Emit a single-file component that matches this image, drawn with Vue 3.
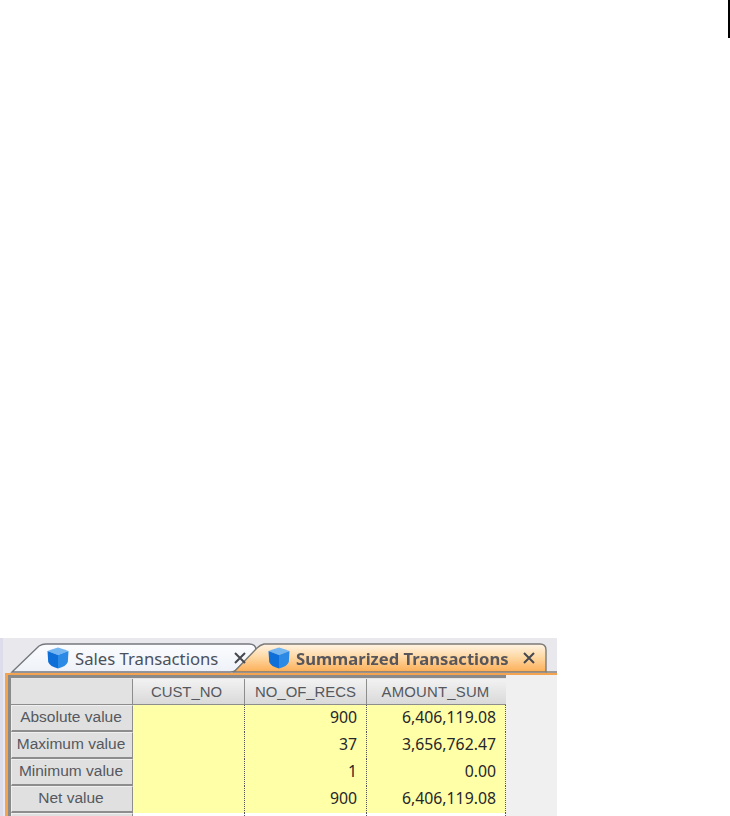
<script setup>
const rows = [
  { label: 'Absolute value', cust: '', recs: '900', sum: '6,406,119.08' },
  { label: 'Maximum value', cust: '', recs: '37', sum: '3,656,762.47' },
  { label: 'Minimum value', cust: '', recs: '1', sum: '0.00' },
  { label: 'Net value', cust: '', recs: '900', sum: '6,406,119.08' },
  { label: '', cust: '', recs: '', sum: '', tail: true }
]
</script>

<template>
  <div class="page">
    <div class="marker"></div>
    <section class="panel">
      <div class="tabstrip">
        <svg class="tabshapes" width="557" height="37" viewBox="0 0 557 37" aria-hidden="true">
          <defs>
            <linearGradient id="idle" x1="0" y1="0" x2="0" y2="1">
              <stop offset="0" stop-color="#fbfcfe" />
              <stop offset="1" stop-color="#eef2f8" />
            </linearGradient>
            <linearGradient id="live" x1="0" y1="0" x2="0" y2="1">
              <stop offset="0" stop-color="#fff4e4" />
              <stop offset="0.45" stop-color="#fed9a6" />
              <stop offset="1" stop-color="#fcae56" />
            </linearGradient>
          </defs>
          <path d="M12 34 L39 8 Q42 6 46 6 L249 6 Q256 6 256 12 L235 33 Q233 34 230 34 Z" fill="url(#idle)" stroke="#74777d" stroke-width="1.4" />
          <path d="M234 34 L257 10 Q260 7 264 6 L540 6 Q546 6 546 12 L546 34 Z" fill="url(#live)" stroke="#7c7a76" stroke-width="1.4" />
          <path d="M546 34 L557 34" stroke="#7c7a76" stroke-width="1.4" />
        </svg>
        <div class="tab idle">
          <svg class="cube" viewBox="0 0 22 22" aria-hidden="true">
            <path d="M0.5 4 Q5 2 11 0.5 Q17 2 21.5 4 L11 8 Z" fill="#74b6f2" />
            <path d="M0.5 4 L11 8 L11 21.5 Q3 19.5 1.2 15 Z" fill="#0f6fd8" />
            <path d="M21.5 4 L11 8 L11 21.5 Q19 19.5 20.8 15 Z" fill="#2a8ae6" />
          </svg>
          <span class="tabtext">Sales Transactions</span>
          <svg class="close" viewBox="0 0 12 12" aria-hidden="true"><path d="M1 1 L11 11 M11 1 L1 11" /></svg>
        </div>
        <div class="tab live">
          <svg class="cube" viewBox="0 0 22 22" aria-hidden="true">
            <path d="M0.5 4 Q5 2 11 0.5 Q17 2 21.5 4 L11 8 Z" fill="#74b6f2" />
            <path d="M0.5 4 L11 8 L11 21.5 Q3 19.5 1.2 15 Z" fill="#0f6fd8" />
            <path d="M21.5 4 L11 8 L11 21.5 Q19 19.5 20.8 15 Z" fill="#2a8ae6" />
          </svg>
          <span class="tabtext strong">Summarized Transactions</span>
          <svg class="close" viewBox="0 0 12 12" aria-hidden="true"><path d="M1 1 L11 11 M11 1 L1 11" /></svg>
        </div>
      </div>
      <div class="frame">
        <div class="gridwrap">
          <div class="grid">
            <div class="head corner"></div>
            <div class="head cust">CUST_NO</div>
            <div class="head">NO_OF_RECS</div>
            <div class="head amount">AMOUNT_SUM</div>
            <template v-for="row in rows" :key="row.label">
              <div class="rowhead">{{ row.label }}</div>
              <div class="cell" :class="{ tail: row.tail }">{{ row.cust }}</div>
              <div class="cell" :class="{ tail: row.tail }">{{ row.recs }}</div>
              <div class="cell" :class="{ tail: row.tail }">{{ row.sum }}</div>
            </template>
          </div>
        </div>
      </div>
    </section>
  </div>
</template>

<style>
html, body { margin: 0; background: #fff; overflow: hidden; }
</style>

<style scoped>
.page {
  width: 730px;
  height: 816px;
  position: relative;
  overflow: hidden;
  background: #fff;
  padding-top: 638px;
  box-sizing: border-box;
}
.marker {
  position: absolute;
  top: 0;
  right: 0;
  width: 2px;
  height: 38px;
  background: #000;
}
.panel {
  width: 557px;
  height: 178px;
  background: #e9e9ed;
  border-left: 3px solid #dcdcea;
  box-sizing: border-box;
  filter: blur(0.45px);
}
.tabstrip {
  position: relative;
  height: 35px;
  display: flex;
  align-items: center;
}
.tabshapes {
  position: absolute;
  left: -3px;
  top: 0;
}
.tab {
  position: relative;
  display: flex;
  align-items: center;
  height: 36px;
  margin-top: 5px;
}
.idle { margin-left: 44px; width: 221px; }
.cube { width: 22px; height: 22px; flex: none; margin-right: 6px; }
.tabtext {
  font-family: "Noto Sans", sans-serif;
  font-size: 16.7px;
  color: #4b505a;
  white-space: nowrap;
}
.idle .tabtext { width: 159px; }
.strong { font-weight: 700; width: 227px; font-size: 16.6px; color: #56565c; }
.close {
  width: 12px;
  height: 12px;
  flex: none;
  fill: none;
  stroke: #45484e;
  stroke-width: 2;
}
.frame {
  height: 143px;
  border-top: 2px solid #f4a450;
  border-left: 3px solid #f4a450;
  margin-left: 2px;
  box-sizing: border-box;
  background: #f0f0f0;
}
.gridwrap {
  width: max-content;
  border-top: 3px solid #8a8a8a;
  border-left: 3px solid #8a8a8a;
  padding-top: 1px;
  background: #e6e6e6;
}
.grid {
  display: grid;
  grid-template-columns: 122px 112px 122px 139px;
  grid-template-rows: 26px repeat(5, 27px);
  width: 495px;
}
.head {
  background: linear-gradient(#f2f2f2, #d9d9d9);
  border-right: 1px solid #8d8d8d;
  border-bottom: 1px solid #8d8d8d;
  box-sizing: border-box;
  display: flex;
  align-items: center;
  justify-content: center;
  font: 14.9px "Liberation Sans", sans-serif;
  color: #55585e;
}
.head:nth-child(4) { border-right: 0; }
.corner { background: #e2e2e2; }
.cust { padding-right: 4px; }
.amount { padding-right: 2px; letter-spacing: 0.2px; }
.rowhead {
  background: #e0e0e0;
  border: 1px solid #f0f0f0;
  border-right: 1px solid #8d8d8d;
  border-bottom: 2px solid #8d8d8d;
  box-sizing: border-box;
  display: flex;
  align-items: center;
  justify-content: center;
  padding: 0 2px 2px 0;
  font: 15.5px "Liberation Sans", sans-serif;
  color: #55585e;
  white-space: nowrap;
}
.cell {
  background: #ffffa8;
  border-right: 1px dotted #555;
  box-sizing: border-box;
  display: flex;
  align-items: center;
  justify-content: flex-end;
  padding: 0 9px 3px 0;
  font: 15.8px "Noto Sans", sans-serif;
  color: #26262a;
}
.tail { background: #fff; }
</style>
